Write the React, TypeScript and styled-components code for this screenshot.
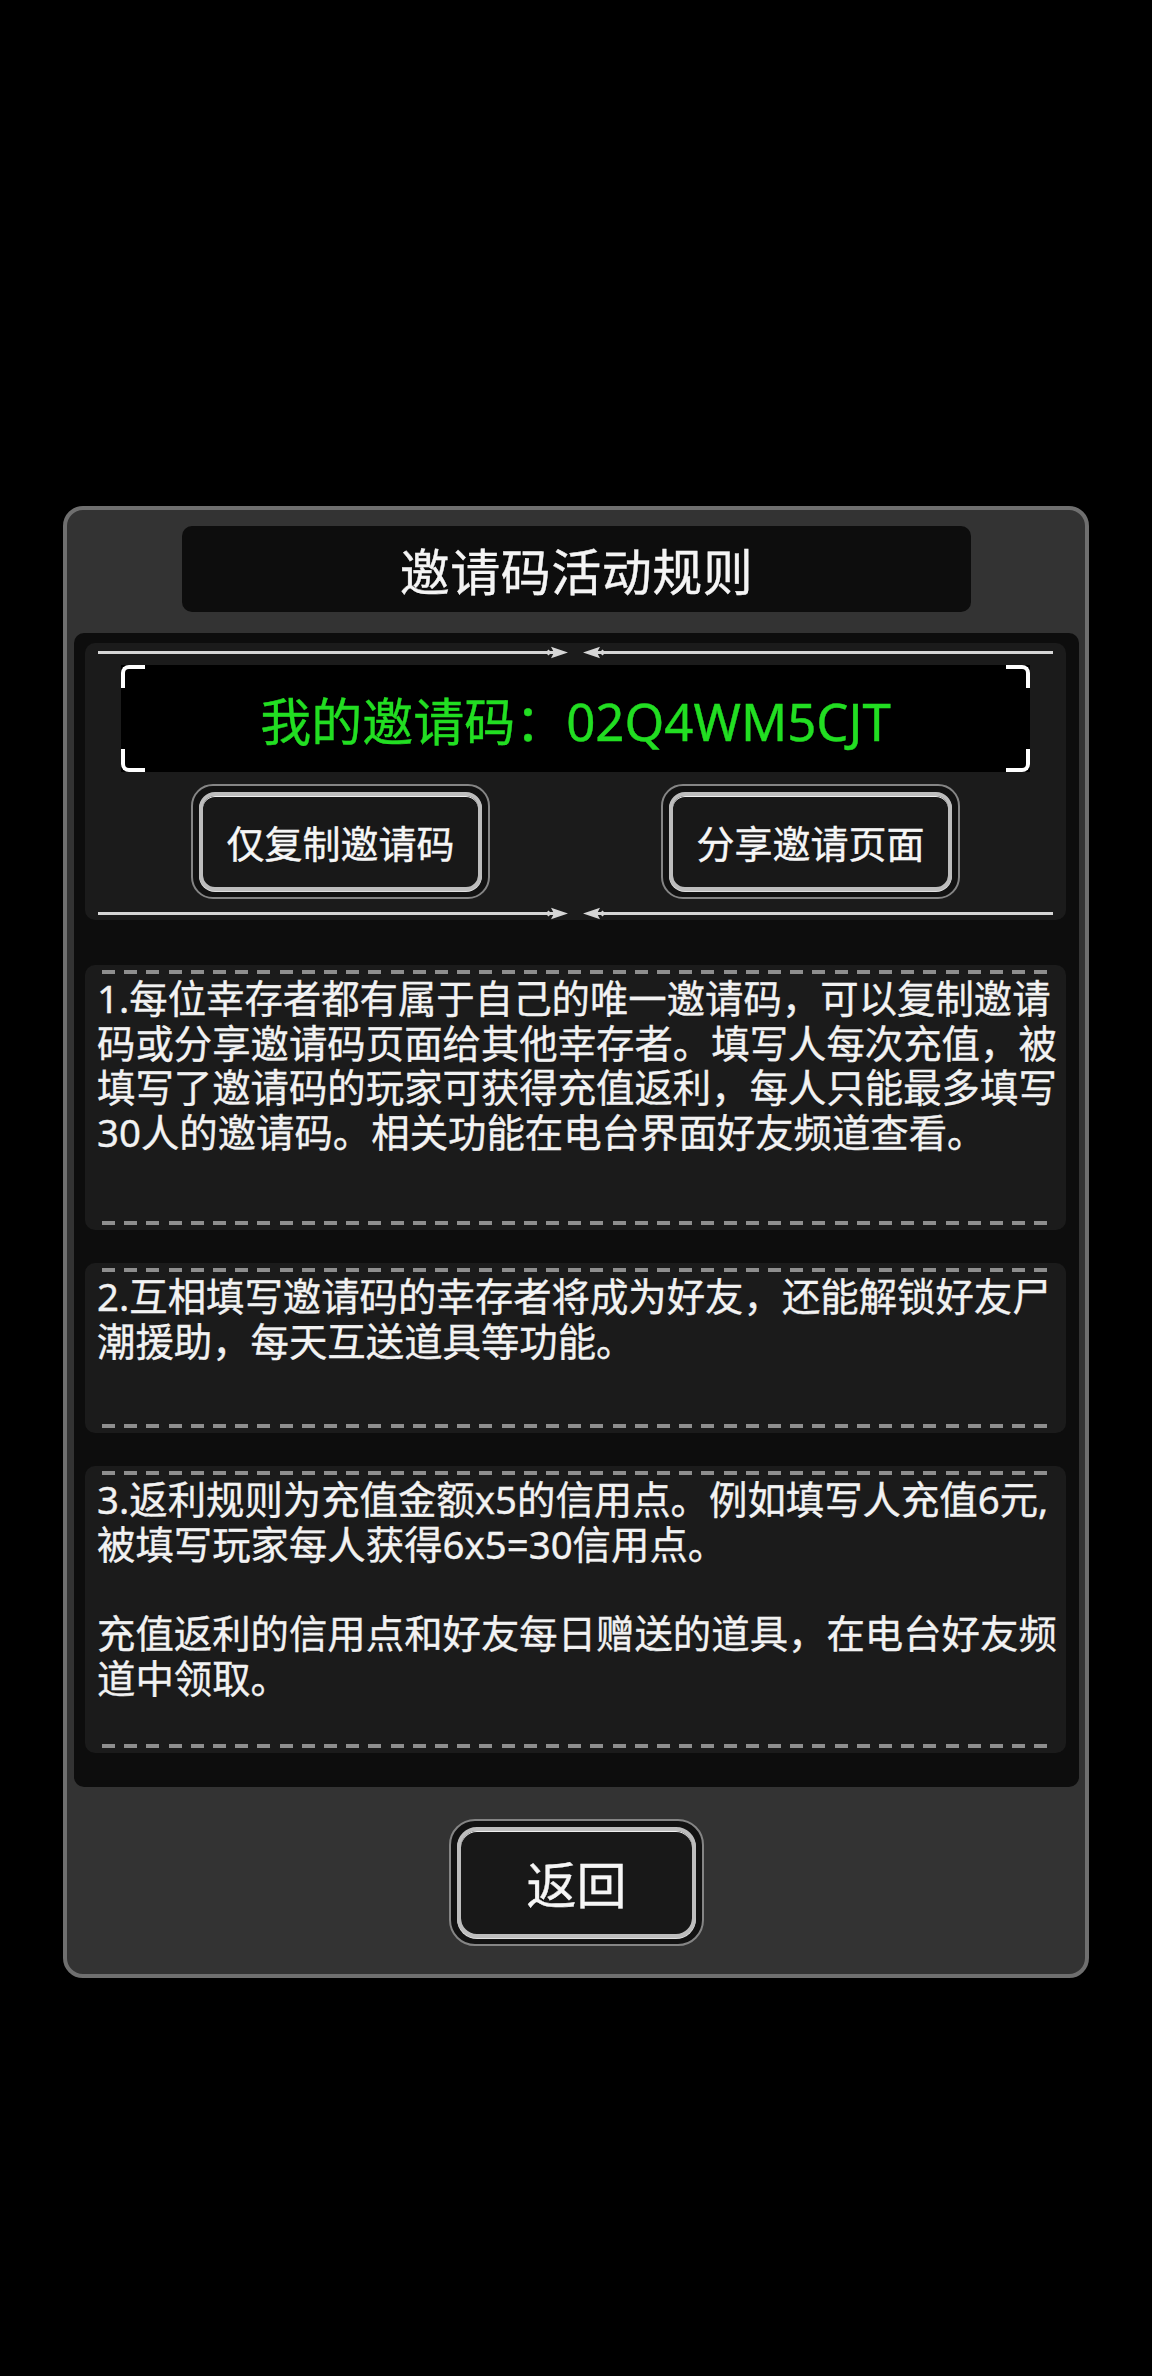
import React from "react";
import styled, { createGlobalStyle, css } from "styled-components";

const GlobalStyle = createGlobalStyle`
  html, body {
    margin: 0;
    padding: 0;
    background: #000;
  }
  body {
    font-family: "Noto Sans", "Noto Sans CJK SC", sans-serif;
    color: #f2f2f2;
  }
  * { box-sizing: border-box; }
`;

const Page = styled.div`
  min-height: 2376px;
  background: #000;
  padding-top: 506px;
  display: flex;
  justify-content: center;
  align-items: flex-start;
`;

const Dialog = styled.div`
  width: 1026px;
  background: #333333;
  border: 4px solid #6f6f6f;
  border-radius: 20px;
  padding: 16px 6px 28px 7px;
  display: flex;
  flex-direction: column;
  align-items: center;
`;

const TitleBar = styled.div`
  width: 789px;
  height: 86px;
  background: #0d0d0d;
  border-radius: 10px;
  display: flex;
  align-items: center;
  justify-content: center;
  font-size: 50px;
  color: #f4f4f4;
  letter-spacing: 0.5px;
  -webkit-text-stroke: 0.4px #f4f4f4;
`;

const InnerPanel = styled.div`
  align-self: stretch;
  margin-top: 21px;
  background: #0d0d0d;
  border-radius: 10px;
  padding: 10px 13px 34px 11px;
  display: flex;
  flex-direction: column;
`;

const CodeSection = styled.div`
  background: #1b1b1b;
  border-radius: 10px;
  padding: 3px 13px 0;
  display: flex;
  flex-direction: column;
  align-items: center;
`;

const OrnamentRow = styled.div<{ $top?: number }>`
  width: 100%;
  height: 13px;
  margin-top: ${(p) => p.$top ?? 0}px;
  display: flex;
  align-items: center;
`;

const OrnamentLine = styled.div`
  flex: 1;
  height: 3px;
  background: #d6d6d6;
`;

const ArrowGroup = styled.div`
  display: flex;
  align-items: center;
  gap: 15px;
`;

const ArrowSvg = styled.svg<{ $flip?: boolean }>`
  width: 23px;
  height: 13px;
  flex: none;
  display: block;
  ${(p) =>
    p.$flip &&
    css`
      transform: scaleX(-1);
    `}
`;

const Arrow = ({ flip }: { flip?: boolean }) => (
  <ArrowSvg $flip={flip} viewBox="0 0 23 13">
    <rect x="0" y="5" width="10" height="3" fill="#d6d6d6" />
    <path d="M0.5 6.5 L3.5 3.6 L6.5 6.5 L3.5 9.4 Z" fill="#d6d6d6" />
    <path d="M6 0.8 L23 6.5 L6 12.2 L9 6.5 Z" fill="#d6d6d6" />
  </ArrowSvg>
);

const Ornament = ({ top }: { top?: number }) => (
  <OrnamentRow $top={top}>
    <OrnamentLine />
    <ArrowGroup>
      <Arrow />
      <Arrow flip />
    </ArrowGroup>
    <OrnamentLine />
  </OrnamentRow>
);

const CodeBox = styled.div`
  position: relative;
  margin-top: 6px;
  width: 909px;
  height: 107px;
  background: #000;
  display: flex;
  align-items: center;
  justify-content: center;
  color: #22de22;
  font-size: 51px;
  -webkit-text-stroke: 0.4px #22de22;
`;

type Corner = "tl" | "tr" | "bl" | "br";

const Bracket = styled.span<{ $corner: Corner }>`
  position: absolute;
  width: 24px;
  height: 23px;
  border: 4px solid #ffffff;
  ${(p) =>
    p.$corner === "tl" &&
    css`
      top: 0;
      left: 0;
      border-right: none;
      border-bottom: none;
      border-top-left-radius: 8px;
    `}
  ${(p) =>
    p.$corner === "tr" &&
    css`
      top: 0;
      right: 0;
      border-left: none;
      border-bottom: none;
      border-top-right-radius: 8px;
    `}
  ${(p) =>
    p.$corner === "bl" &&
    css`
      bottom: 0;
      left: 0;
      border-right: none;
      border-top: none;
      border-bottom-left-radius: 8px;
    `}
  ${(p) =>
    p.$corner === "br" &&
    css`
      bottom: 0;
      right: 0;
      border-left: none;
      border-top: none;
      border-bottom-right-radius: 8px;
    `}
`;

const ButtonRow = styled.div`
  margin-top: 12px;
  display: flex;
  gap: 171px;
  justify-content: center;
`;

const ButtonRing = styled.div<{ $w: number; $h: number; $radius: number }>`
  width: ${(p) => p.$w}px;
  height: ${(p) => p.$h}px;
  border: 2px solid #858585;
  border-radius: ${(p) => p.$radius}px;
  background: #121212;
  padding: 6px;
  display: flex;
  cursor: pointer;
`;

const ButtonFace = styled.div<{ $size: number; $radius: number }>`
  flex: 1;
  border: 4px solid #bdbdbd;
  border-radius: ${(p) => p.$radius}px;
  background: #181818;
  box-shadow: inset 0 1px 0 #efefef, 0 1px 0 #e0e0e0;
  display: flex;
  align-items: center;
  justify-content: center;
  color: #f6f6f6;
  font-size: ${(p) => p.$size}px;
  -webkit-text-stroke: 0.4px #f6f6f6;
`;

const RulesList = styled.div`
  margin-top: 45px;
  display: flex;
  flex-direction: column;
  gap: 33px;
`;

const RuleBox = styled.div`
  background: #1b1b1b;
  border-radius: 10px;
  padding: 5px 0;
  display: flex;
  flex-direction: column;
`;

const Dash = styled.div`
  height: 4px;
  margin: 0 17px;
  background: repeating-linear-gradient(
    90deg,
    #8e8e8e 0 13px,
    transparent 13px 22.2px
  );
`;

const RuleText = styled.p<{ $after: number }>`
  margin: 2px 0 ${(p) => p.$after}px;
  padding: 0 7px 0 12px;
  font-size: 38.4px;
  line-height: 44.7px;
  color: #f2f2f2;
  -webkit-text-stroke: 0.35px #f2f2f2;
  white-space: pre-wrap;
  line-break: strict;
`;

const BackWrap = styled.div`
  margin-top: 32px;
`;

const rules: { text: string; after: number }[] = [
  {
    text:
      "1.每位幸存者都有属于自己的唯一邀请码，可以复制邀请码或分享邀请码页面给其他幸存者。填写人每次充值，被填写了邀请码的玩家可获得充值返利，每人只能最多填写30人的邀请码。相关功能在电台界面好友频道查看。",
    after: 66,
  },
  {
    text: "2.互相填写邀请码的幸存者将成为好友，还能解锁好友尸潮援助，每天互送道具等功能。",
    after: 61,
  },
  {
    text:
      "3.返利规则为充值金额x5的信用点。例如填写人充值6元,被填写玩家每人获得6x5=30信用点。\n\n充值返利的信用点和好友每日赠送的道具，在电台好友频道中领取。",
    after: 43,
  },
];

export default function App() {
  return (
    <>
      <GlobalStyle />
      <Page>
        <Dialog>
          <TitleBar>邀请码活动规则</TitleBar>
          <InnerPanel>
            <CodeSection>
              <Ornament />
              <CodeBox>
                <Bracket $corner="tl" />
                <Bracket $corner="tr" />
                <Bracket $corner="bl" />
                <Bracket $corner="br" />
                我的邀请码：02Q4WM5CJT
              </CodeBox>
              <ButtonRow>
                <ButtonRing $w={299} $h={115} $radius={22}>
                  <ButtonFace $size={38} $radius={16}>
                    仅复制邀请码
                  </ButtonFace>
                </ButtonRing>
                <ButtonRing $w={299} $h={115} $radius={22}>
                  <ButtonFace $size={38} $radius={16}>
                    分享邀请页面
                  </ButtonFace>
                </ButtonRing>
              </ButtonRow>
              <Ornament top={8} />
            </CodeSection>
            <RulesList>
              {rules.map((r, i) => (
                <RuleBox key={i}>
                  <Dash />
                  <RuleText $after={r.after}>{r.text}</RuleText>
                  <Dash />
                </RuleBox>
              ))}
            </RulesList>
          </InnerPanel>
          <BackWrap>
            <ButtonRing $w={255} $h={127} $radius={26}>
              <ButtonFace $size={50} $radius={20}>
                返回
              </ButtonFace>
            </ButtonRing>
          </BackWrap>
        </Dialog>
      </Page>
    </>
  );
}
